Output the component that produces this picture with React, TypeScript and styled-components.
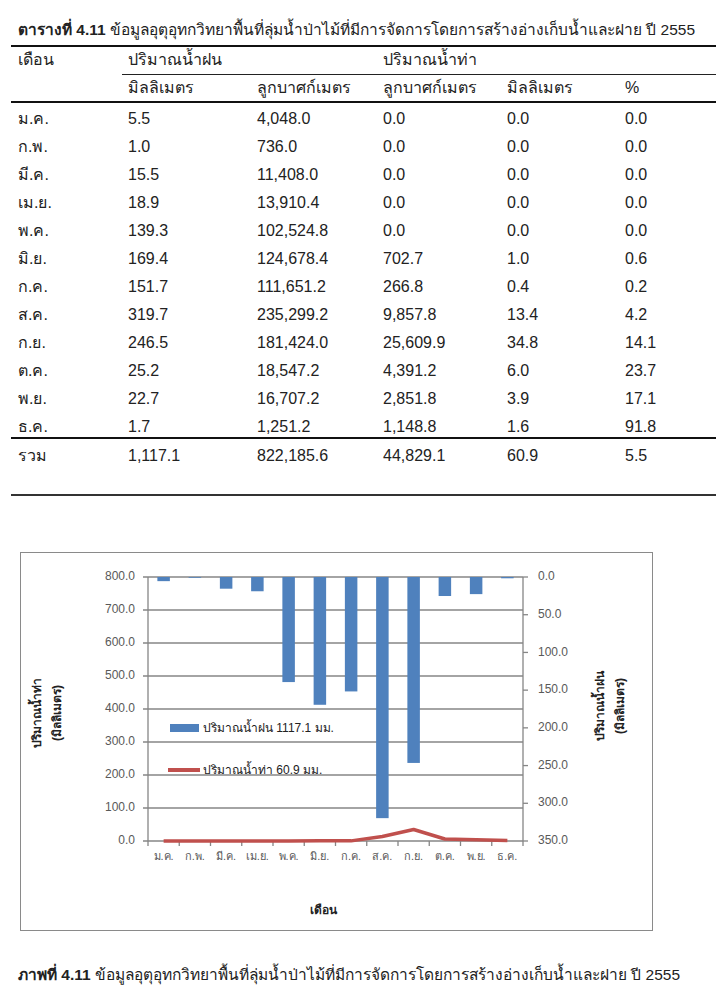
import { FC, Fragment } from 'react';
import styled, { createGlobalStyle } from 'styled-components';

const GlobalStyle = createGlobalStyle`
  body {
    margin: 0;
    background: #fff;
    font-family: "Liberation Sans", "Noto Sans", "DejaVu Sans", sans-serif;
    color: #222;
  }
`

const Page = styled.div`
  width: 716px;
  padding-left: 11px;
  box-sizing: border-box;
`

const Caption = styled.div`
  font-size: 15.5px;
  line-height: 20px;
  padding: ${p => p.$top}px 0 0 7px;
  white-space: nowrap;
  b { font-weight: bold; }
`

const Table = styled.div`
  display: grid;
  grid-template-columns: 111px 129px 126px 124px 118px 1fr;
  border-top: 2px solid #111;
  margin-top: 5px;
`

const Cell = styled.div`
  font-size: 16px;
  height: ${p => p.$h || 28}px;
  line-height: 22px;
  padding: ${p => p.$pt ?? 2}px 0 0 ${p => p.$first ? 7 : 6}px;
  grid-column: ${p => p.$span || 'auto'};
  white-space: nowrap;
  border-bottom: ${p => p.$line || 'none'};
  box-sizing: border-box;
`

const ChartFrame = styled.div`
  margin: 56px 0 0 9px;
  width: 633px;
  height: 379px;
  border: 1.5px solid #8a8a8a;
  box-sizing: border-box;
  svg { display: block; }
`

const months = ['ม.ค.', 'ก.พ.', 'มี.ค.', 'เม.ย.', 'พ.ค.', 'มิ.ย.', 'ก.ค.', 'ส.ค.', 'ก.ย.', 'ต.ค.', 'พ.ย.', 'ธ.ค.']

const rows: string[][] = [
  ['5.5', '4,048.0', '0.0', '0.0', '0.0'],
  ['1.0', '736.0', '0.0', '0.0', '0.0'],
  ['15.5', '11,408.0', '0.0', '0.0', '0.0'],
  ['18.9', '13,910.4', '0.0', '0.0', '0.0'],
  ['139.3', '102,524.8', '0.0', '0.0', '0.0'],
  ['169.4', '124,678.4', '702.7', '1.0', '0.6'],
  ['151.7', '111,651.2', '266.8', '0.4', '0.2'],
  ['319.7', '235,299.2', '9,857.8', '13.4', '4.2'],
  ['246.5', '181,424.0', '25,609.9', '34.8', '14.1'],
  ['25.2', '18,547.2', '4,391.2', '6.0', '23.7'],
  ['22.7', '16,707.2', '2,851.8', '3.9', '17.1'],
  ['1.7', '1,251.2', '1,148.8', '1.6', '91.8'],
]

const rain = [5.5, 1.0, 15.5, 18.9, 139.3, 169.4, 151.7, 319.7, 246.5, 25.2, 22.7, 1.7]
const runoff = [0, 0, 0, 0, 0, 1.0, 0.4, 13.4, 34.8, 6.0, 3.9, 1.6]

// plot area inside the frame
const X0 = 127
const X1 = 502
const Y0 = 24
const Y1 = 288
const step = (X1 - X0) / 12
const grey = '#868686'
const label = '#595959'

const Chart: FC = () => {
  const cx = (i: number) => X0 + (i + 0.5) * step
  const pts = runoff.map((v, i) => `${cx(i)},${Y1 - v * (Y1 - Y0) / 800}`).join(' ')
  return (
    <svg width="630" height="376" fontFamily='"Liberation Sans", "Noto Sans", sans-serif'>
      {Array.from({ length: 9 }).map((_, i) => {
        const y = Y0 + i * (Y1 - Y0) / 8
        return (
          <g key={i}>
            <line x1={X0 - 5} x2={X1} y1={y} y2={y} stroke={grey} strokeWidth="1.3" />
            <text x={X0 - 13} y={y} fontSize="12" fill={label} textAnchor="end" dominantBaseline="middle">
              {((8 - i) * 100).toFixed(1)}
            </text>
          </g>
        )
      })}
      {Array.from({ length: 8 }).map((_, i) => {
        const y = Y0 + i * (Y1 - Y0) / 7
        return (
          <g key={i}>
            <line x1={X1} x2={X1 + 5} y1={y} y2={y} stroke={grey} strokeWidth="1.3" />
            <text x={X1 + 15} y={y} fontSize="12" fill={label} dominantBaseline="middle">
              {(i * 50).toFixed(1)}
            </text>
          </g>
        )
      })}
      <line x1={X0} x2={X0} y1={Y0} y2={Y1} stroke={grey} strokeWidth="1.3" />
      <line x1={X1} x2={X1} y1={Y0} y2={Y1} stroke={grey} strokeWidth="1.3" />
      {Array.from({ length: 13 }).map((_, i) => (
        <line key={i} x1={X0 + i * step} x2={X0 + i * step} y1={Y1} y2={Y1 + 5} stroke={grey} strokeWidth="1.3" />
      ))}
      {rain.map((v, i) => (
        <rect key={i} x={cx(i) - 6.25} y={Y0} width="12.5" height={v * (Y1 - Y0) / 350} fill="#4F81BD" />
      ))}
      <polyline points={pts} fill="none" stroke="#C0504D" strokeWidth="3.5" strokeLinejoin="round" />
      {months.map((m, i) => (
        <text key={m} x={cx(i)} y={Y1 + 16} fontSize="11" fill={label} textAnchor="middle" dominantBaseline="middle">{m}</text>
      ))}
      <rect x="149" y="171" width="29" height="8" fill="#4F81BD" />
      <text x="182" y="176" fontSize="12" fill="#222" dominantBaseline="middle">ปริมาณน้ำฝน 1117.1 มม.</text>
      <line x1="147" x2="179" y1="217" y2="217" stroke="#C0504D" strokeWidth="4" />
      <text x="182" y="218" fontSize="12" fill="#222" dominantBaseline="middle">ปริมาณน้ำท่า 60.9 มม.</text>
      <g transform="translate(26 160) rotate(-90)" fontSize="12" fontWeight="bold" fill="#222" textAnchor="middle">
        <text y="-6">ปริมาณน้ำท่า</text>
        <text y="14">(มิลลิเมตร)</text>
      </g>
      <g transform="translate(589 153) rotate(-90)" fontSize="12" fontWeight="bold" fill="#222" textAnchor="middle">
        <text y="-6">ปริมาณน้ำฝน</text>
        <text y="14">(มิลลิเมตร)</text>
      </g>
      <text x="302" y="361" fontSize="12" fontWeight="bold" fill="#222" textAnchor="middle">เดือน</text>
    </svg>
  )
}

const App: FC = () => {
  const last = '2px solid #111'
  return (
    <Page>
      <GlobalStyle />
      <Caption $top={20}><b>ตารางที่ 4.11</b> ข้อมูลอุตุอุทกวิทยาพื้นที่ลุ่มน้ำป่าไม้ที่มีการจัดการโดยการสร้างอ่างเก็บน้ำและฝาย ปี 2555</Caption>
      <Table>
        <Cell $first>เดือน</Cell>
        <Cell $span="span 2" $line="1px solid #222">ปริมาณน้ำฝน</Cell>
        <Cell $span="span 3" $line="1px solid #222">ปริมาณน้ำท่า</Cell>
        <Cell $first $line={last} />
        {['มิลลิเมตร', 'ลูกบาศก์เมตร', 'ลูกบาศก์เมตร', 'มิลลิเมตร', '%'].map((h, i) => (
          <Cell key={i} $line={last}>{h}</Cell>
        ))}
        {rows.map((r, i) => (
          <Fragment key={i}>
            <Cell $first $pt={5} $line={i === 11 ? last : 'none'}>{months[i]}</Cell>
            {r.map((v, j) => (
              <Cell key={j} $pt={5} $line={i === 11 ? last : 'none'}>{v}</Cell>
            ))}
          </Fragment>
        ))}
        {['รวม', '1,117.1', '822,185.6', '44,829.1', '60.9', '5.5'].map((v, i) => (
          <Cell key={'t' + i} $first={i === 0} $pt={6} $h={57} $line="2px solid #333">{v}</Cell>
        ))}
      </Table>
      <ChartFrame>
        <Chart />
      </ChartFrame>
      <Caption $top={34}><b>ภาพที่ 4.11</b> ข้อมูลอุตุอุทกวิทยาพื้นที่ลุ่มน้ำป่าไม้ที่มีการจัดการโดยการสร้างอ่างเก็บน้ำและฝาย ปี 2555</Caption>
    </Page>
  )
}

export default App
